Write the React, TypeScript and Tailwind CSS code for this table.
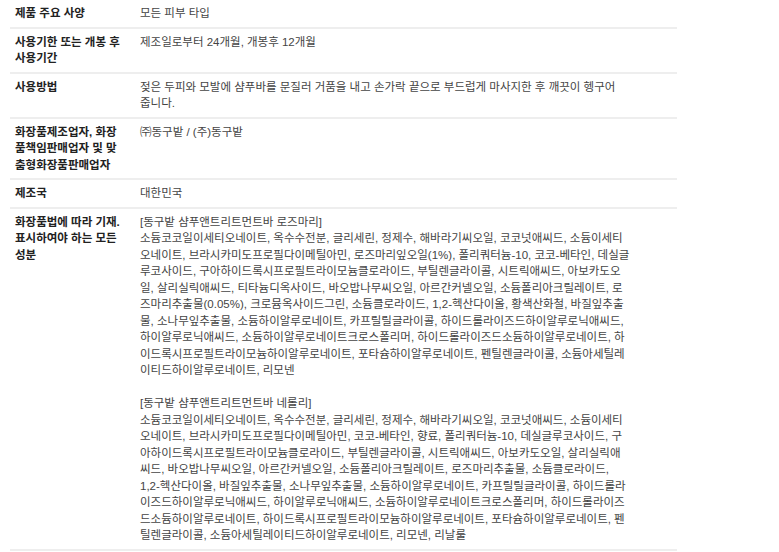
const FONT = '"Liberation Sans", "Noto Sans CJK KR", sans-serif';

type Row = {
  label: string[];
  value: string[];
};

// 표의 줄바꿈은 원본 그대로 맞추기 위해 줄 단위로 나눠 둠
const rows: Row[] = [
  { label: ["제품 주요 사양"], value: ["모든 피부 타입"] },
  {
    label: ["사용기한 또는 개봉 후", "사용기간"],
    value: ["제조일로부터 24개월, 개봉후 12개월"],
  },
  {
    label: ["사용방법"],
    value: [
      "젖은 두피와 모발에 샴푸바를 문질러 거품을 내고 손가락 끝으로 부드럽게 마사지한 후 깨끗이 헹구어",
      "줍니다.",
    ],
  },
  {
    label: ["화장품제조업자, 화장", "품책임판매업자 및 맞", "춤형화장품판매업자"],
    value: ["㈜동구밭 / (주)동구밭"],
  },
  { label: ["제조국"], value: ["대한민국"] },
  {
    label: ["화장품법에 따라 기재.", "표시하여야 하는 모든", "성분"],
    value: [
      "[동구밭 샴푸앤트리트먼트바 로즈마리]",
      "소듐코코일이세티오네이트, 옥수수전분, 글리세린, 정제수, 해바라기씨오일, 코코넛애씨드, 소듐이세티",
      "오네이트, 브라시카미도프로필다이메틸아민, 로즈마리잎오일(1%), 폴리쿼터늄-10, 코코-베타인, 데실글",
      "루코사이드, 구아하이드록시프로필트라이모늄클로라이드, 부틸렌글라이콜, 시트릭애씨드, 아보카도오",
      "일, 살리실릭애씨드, 티타늄디옥사이드, 바오밥나무씨오일, 아르간커넬오일, 소듐폴리아크릴레이트, 로",
      "즈마리추출물(0.05%), 크로뮴옥사이드그린, 소듐클로라이드, 1,2-헥산다이올, 황색산화철, 바질잎추출",
      "물, 소나무잎추출물, 소듐하이알루로네이트, 카프릴릴글라이콜, 하이드롤라이즈드하이알루로닉애씨드,",
      "하이알루로닉애씨드, 소듐하이알루로네이트크로스폴리머, 하이드롤라이즈드소듐하이알루로네이트, 하",
      "이드록시프로필트라이모늄하이알루로네이트, 포타슘하이알루로네이트, 펜틸렌글라이콜, 소듐아세틸레",
      "이티드하이알루로네이트, 리모넨",
      "",
      "[동구밭 샴푸앤트리트먼트바 네롤리]",
      "소듐코코일이세티오네이트, 옥수수전분, 글리세린, 정제수, 해바라기씨오일, 코코넛애씨드, 소듐이세티",
      "오네이트, 브라시카미도프로필다이메틸아민, 코코-베타인, 향료, 폴리쿼터늄-10, 데실글루코사이드, 구",
      "아하이드록시프로필트라이모늄클로라이드, 부틸렌글라이콜, 시트릭애씨드, 아보카도오일, 살리실릭애",
      "씨드, 바오밥나무씨오일, 아르간커넬오일, 소듐폴리아크릴레이트, 로즈마리추출물, 소듐클로라이드,",
      "1,2-헥산다이올, 바질잎추출물, 소나무잎추출물, 소듐하이알루로네이트, 카프릴릴글라이콜, 하이드롤라",
      "이즈드하이알루로닉애씨드, 하이알루로닉애씨드, 소듐하이알루로네이트크로스폴리머, 하이드롤라이즈",
      "드소듐하이알루로네이트, 하이드록시프로필트라이모늄하이알루로네이트, 포타슘하이알루로네이트, 펜",
      "틸렌글라이콜, 소듐아세틸레이티드하이알루로네이트, 리모넨, 리날룰",
    ],
  },
];

const Lines: React.FC<{ lines: string[] }> = ({ lines }) => (
  <>
    {lines.map((line, i) => (
      <span key={i} className="block whitespace-nowrap h-[16.5px]">
        {line}
      </span>
    ))}
  </>
);

export default function App() {
  return (
    <div
      className="w-full min-h-[552px] bg-white pl-[10px] text-[11.5px] leading-[16.5px]"
      style={{ fontFamily: FONT }}
    >
      <table className="w-[667px] border-collapse">
        <tbody>
          {rows.map((row, i) => (
            <tr key={i} className="border-b-2 border-[#eeeeee]">
              {/* 좌측 - 항목명 */}
              <td className="w-[125px] align-top px-[5px] py-[5px] font-bold text-[#222222]">
                <Lines lines={row.label} />
              </td>
              {/* 우측 - 내용 */}
              <td className="align-top px-[5px] py-[5px] text-[#444444]">
                <Lines lines={row.value} />
              </td>
            </tr>
          ))}
        </tbody>
      </table>
    </div>
  );
}
